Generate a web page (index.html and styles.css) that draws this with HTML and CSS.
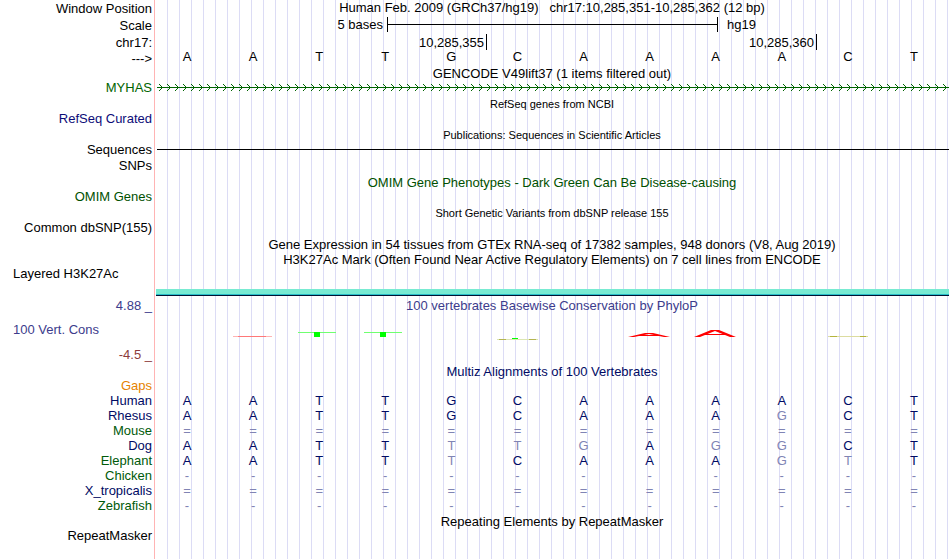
FILE: index.html
```html
<!DOCTYPE html>
<html lang="en">
<head>
<meta charset="utf-8">
<title>Genome Browser hg19 chr17:10,285,351-10,285,362</title>
<meta name="viewport" content="width=device-width, initial-scale=1">
<link rel="stylesheet" href="styles.css">
</head>
<body>
<main class="browser" id="browser">
  <section class="row position"><div class="label">Window Position</div><div class="title">Human Feb. 2009 (GRCh37/hg19) &nbsp; chr17:10,285,351-10,285,362 (12 bp)</div></section>
  <section class="row ruler"><div class="label">Scale</div>
    <div class="scale"><span class="scale-size">5 bases</span><span class="scale-bar"></span><span class="scale-db">hg19</span></div></section>
  <section class="row ruler"><div class="label">chr17:</div>
    <div class="ticks"><span class="tick">10,285,355</span><span class="tick">10,285,360</span></div></section>
  <section class="row sequence"><div class="label">---&gt;</div><div class="bases" data-bases="AATTGCAAAACT"></div></section>

  <section class="track">
    <div class="row head"><h2 class="title">GENCODE V49lift37 (1 items filtered out)</h2></div>
    <div class="row"><div class="label gene">MYHAS</div>
      <svg class="gene-line" height="15" aria-hidden="true">
        <defs><pattern id="strand" width="8" height="15" patternUnits="userSpaceOnUse"><path d="M2 4h1v1h-1zM3 5h1v1h-1zM4 6h1v1h-1zM5 7h1v1h-1zM4 8h1v1h-1zM3 9h1v1h-1zM2 10h1v1h-1z" fill="#006400"/></pattern></defs>
        <rect x="0" y="7" width="100%" height="1" fill="#006400"/><rect width="100%" height="15" fill="url(#strand)"/>
      </svg></div>
  </section>
  <section class="track">
    <div class="row head"><h2 class="title small">RefSeq genes from NCBI</h2></div>
    <div class="row"><div class="label refseq">RefSeq Curated</div></div>
  </section>
  <section class="track">
    <div class="row head"><h2 class="title small">Publications: Sequences in Scientific Articles</h2></div>
    <div class="row"><div class="label">Sequences</div><div class="item-line"></div></div>
    <div class="row snps"><div class="label">SNPs</div></div>
  </section>
  <section class="track">
    <div class="row head"><h2 class="title omim">OMIM Gene Phenotypes - Dark Green Can Be Disease-causing</h2></div>
    <div class="row"><div class="label omim">OMIM Genes</div></div>
  </section>
  <section class="track">
    <div class="row head"><h2 class="title small">Short Genetic Variants from dbSNP release 155</h2></div>
    <div class="row"><div class="label">Common dbSNP(155)</div></div>
  </section>
  <section class="track">
    <div class="row"><h2 class="title">Gene Expression in 54 tissues from GTEx RNA-seq of 17382 samples, 948 donors (V8, Aug 2019)</h2></div>
    <div class="row head"><h2 class="title">H3K27Ac Mark (Often Found Near Active Regulatory Elements) on 7 cell lines from ENCODE</h2></div>
    <div class="row"><div class="label start">Layered H3K27Ac</div></div>
    <div class="row signal"><div class="signal-bar"></div></div>
  </section>
  <section class="track">
    <div class="row"><div class="label phylop">4.88 _</div><h2 class="title phylop">100 vertebrates Basewise Conservation by PhyloP</h2></div>
    <div class="row wiggle"><div class="label start phylop">100 Vert. Cons</div>
      <svg class="logo" height="34" viewBox="154 313 796 34" preserveAspectRatio="none" aria-hidden="true">
        <path d="M233 336h39v1h-39z" fill="#ffb4b4"/><path d="M238 336h28v1h-28z" fill="#ff7878"/>
        <path d="M298 332h38v1h-38zM364 332h38v1h-38z" fill="#70ff70"/>
        <path d="M314 332h6v5h-6zM380 332h6v5h-6z" fill="#0f0"/>
        <path d="M497 339h41v1h-41z" fill="#dce6b4"/><path d="M499 339h7v1h-7zM529 339h7v1h-7z" fill="#b4b450"/><path d="M512 338h6v1h-6z" fill="#0f0"/>
        <path d="M628 337L645 333H653L670 337H664L649 334L634 337ZM640 335h18v1h-18z" fill="red"/>
        <path d="M694 337L711 330H719L736 337H730L715 331L700 337ZM705 334h20v1h-20z" fill="red"/>
        <path d="M828 336h40v1h-40z" fill="#dcdca0"/><path d="M830 336h7v1h-7zM860 336h6v1h-6z" fill="#b4b43c"/>
      </svg></div>
    <div class="row"><div class="label lower">-4.5 _</div></div>
  </section>
  <section class="track alignment">
    <div class="row head"><h2 class="title multiz">Multiz Alignments of 100 Vertebrates</h2></div>
    <div class="row"><div class="label gaps">Gaps</div></div>
    <div class="row align"><div class="label multiz">Human</div><div class="bases" data-bases="AATTGCAAAACT"></div></div>
    <div class="row align"><div class="label multiz">Rhesus</div><div class="bases" data-bases="AATTGCAAAGCT"></div></div>
    <div class="row align"><div class="label alt">Mouse</div><div class="bases" data-bases="============"></div></div>
    <div class="row align"><div class="label multiz">Dog</div><div class="bases" data-bases="AATTTTGAGGCT"></div></div>
    <div class="row align"><div class="label alt">Elephant</div><div class="bases" data-bases="AATTTCAAAGTT"></div></div>
    <div class="row align"><div class="label alt">Chicken</div><div class="bases" data-bases="------------"></div></div>
    <div class="row align"><div class="label multiz">X_tropicalis</div><div class="bases" data-bases="============"></div></div>
    <div class="row align"><div class="label alt">Zebrafish</div><div class="bases" data-bases="------------"></div></div>
  </section>
  <section class="track">
    <div class="row head"><h2 class="title">Repeating Elements by RepeatMasker</h2></div>
    <div class="row"><div class="label">RepeatMasker</div></div>
  </section>
</main>
<script src="script.js"></script>
</body>
</html>
```
FILE: styles.css
```css
* { box-sizing: border-box; }
body {
  margin: 0;
  background: #fff;
  color: #000;
  font: 13px/15px "Liberation Sans", Arial, sans-serif;
}
.browser {
  min-height: 100vh;
  background:
    linear-gradient(#ffb4b4, #ffb4b4) 154px 0 / 1px 100% no-repeat,
    repeating-linear-gradient(90deg, transparent 0 11px, #dcdcf5 11px 12px) 156px 0 no-repeat;
}
.row {
  display: grid;
  grid-template-columns: 154px minmax(0, 1fr);
  min-height: 15px;
}
.head { height: 14px; min-height: 0; }
.label {
  grid-column: 1;
  padding-right: 2px;
  text-align: right;
  white-space: pre;
}
.start { padding-left: 13px; text-align: left; }
.title {
  grid-column: 2;
  margin: 0;
  font-size: 13px;
  font-weight: normal;
  text-align: center;
  white-space: nowrap;
}
.small { font-size: 11px; }
.track { padding-bottom: 2px; }
.alignment { padding-bottom: 1px; }
.position { height: 16px; }
.position .label { padding-top: 1px; }
.ruler { height: 17px; }
.ruler .label { padding-top: 2px; }
.scale {
  display: grid;
  grid-template-columns: 233fr 331fr 232fr;
  padding: 1px 0;
}
.scale-size { padding-right: 4px; text-align: right; }
.scale-bar {
  border: solid #000;
  border-width: 0 1px;
  background: linear-gradient(#000, #000) 0 7px / 100% 1px no-repeat;
}
.scale-db { padding-left: 9px; }
.ticks {
  display: grid;
  grid-template-columns: 333fr 330fr 133fr;
  padding: 1px 0;
}
.tick { padding: 1px 2px 0 0; border-right: 1px solid #000; text-align: right; }
.bases {
  display: grid;
  grid-template-columns: repeat(12, 1fr);
  padding-right: 3px;
  text-align: center;
}
.sequence { height: 16px; }
.sequence .label { padding-top: 1px; }
.sequence .bases { line-height: 13px; }
.gene-line { display: block; width: calc(100% - 4px); margin-left: 3px; }
.item-line { height: 1px; margin: 7px 1px 0 3px; background: #000; }
.snps { padding-top: 1px; }
.signal { padding-top: 8px; }
.signal-bar {
  grid-column: 2;
  height: 7px;
  margin: 0 1px 0 2px;
  background: linear-gradient(#78ebd2 0 5px, #28bec8 5px 6px, #001432 6px);
}
.wiggle .label { padding-top: 9px; }
.logo { display: block; width: 100%; }
.gene { color: #006400; }
.refseq { color: #0c0c78; }
.omim { color: #005000; }
.phylop { color: #3c3c8c; }
.lower { color: #8c3c3c; }
.multiz { color: #000a64; }
.gaps { color: #e68200; }
.alt { color: #005a0a; }
.align .bases { color: #000a64; }
.align .differs { color: #8084b4; }
```
FILE: script.js
```js
// Expand each base string into one cell per position; aligned bases that
// differ from the human reference are drawn in a lighter shade.
const reference = "AATTGCAAAACT";
document.querySelectorAll(".bases").forEach((row) => {
  [...row.dataset.bases].forEach((base, i) => {
    const cell = document.createElement("span");
    cell.textContent = base;
    if (base !== reference[i]) cell.className = "differs";
    row.append(cell);
  });
});
```
